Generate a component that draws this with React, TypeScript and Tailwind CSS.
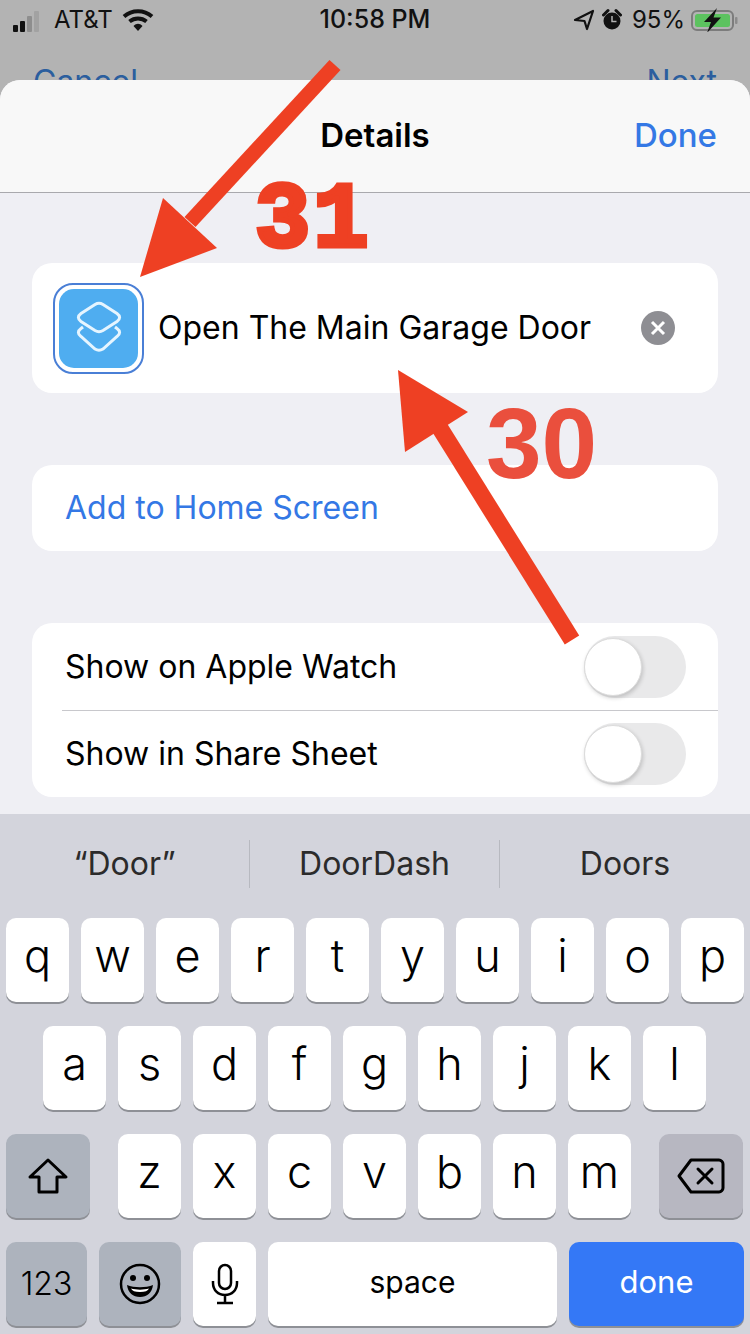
function StatusBar() {
  return (
    <div className="flex h-10 items-center justify-between pl-[13px] pr-[9px] text-[24px] text-[#111]">
      <div className="flex w-[296px] items-center">
        <svg width="32" height="24" viewBox="0 0 32 24" className="mr-[9px]">
          <rect x="0" y="17" width="5" height="7" rx="1" fill="#111" />
          <rect x="7" y="13" width="5" height="11" rx="1" fill="#111" />
          <rect x="14" y="8" width="5" height="16" rx="1" fill="#8e8e8e" />
          <rect x="21" y="3" width="5" height="21" rx="1" fill="#a2a2a2" />
        </svg>
        <span>AT&amp;T</span>
        <svg width="32" height="24" viewBox="0 0 32 24" className="ml-[9px]">
          <path d="M2 8.500C10 1.500 22 1.500 30 8.500" fill="none" stroke="#111" strokeWidth="4" />
          <path d="M7.500 13.500C12.500 9.500 19.500 9.500 24.500 13.500" fill="none" stroke="#111" strokeWidth="4" />
          <path d="M11.500 18C14.500 15 17.500 15 20.500 18L16 23Z" fill="#111" />
        </svg>
      </div>
      <span className="text-[25px] font-medium">10:58 PM</span>
      <div className="flex w-[300px] items-center justify-end">
        <svg width="22" height="24" viewBox="0 0 22 24" className="mr-[7px]">
          <path d="M2 12L20 3L14 21L11.500 13Z" fill="none" stroke="#111" strokeWidth="2.200" strokeLinejoin="round" />
        </svg>
        <svg width="20" height="24" viewBox="0 0 20 24" className="mr-[10px]">
          <circle cx="10" cy="13" r="8.500" fill="#111" />
          <path d="M1.500 7L6 2.500M18.500 7L14 2.500" stroke="#111" strokeWidth="3" strokeLinecap="round" />
          <path d="M10 8V13.500H14.500" fill="none" stroke="#b3b3b3" strokeWidth="1.500" />
        </svg>
        <span>95%</span>
        <svg width="50" height="24" viewBox="0 0 50 24" className="ml-[6px]">
          <rect x="1" y="3" width="41" height="19" rx="5" fill="none" stroke="#7c7c7c" strokeWidth="2" />
          <rect x="4" y="6" width="35" height="13" rx="2.500" fill="#5cc25f" />
          <rect x="44" y="9" width="2.500" height="7" rx="1" fill="#8b8b8b" />
          <path d="M26 0L13 14H20L16 25L30 9.500H22.500Z" fill="#111" />
        </svg>
      </div>
    </div>
  );
}

function Toggle() {
  return (
    <div className="flex h-[62px] w-[102px] items-center rounded-full bg-[#e9e9ea]">
      <div className="h-[58px] w-[58px] rounded-full border border-[#dcdcdc] bg-white shadow-[1px_2px_4px_rgba(0,0,0,0.18)]" />
    </div>
  );
}

function Key({ label }: { label: string }) {
  return (
    <div className="flex h-[84px] w-[63px] items-center justify-center rounded-[10px] bg-white pb-[8px] text-[45px] font-light text-black shadow-[0_2px_0_#8e9096]">
      {label}
    </div>
  );
}

function Keyboard() {
  return (
    <div className="h-[520px] bg-[#d3d4dc]">
      <div className="flex h-[104px] items-center pb-1 text-[32px] text-[#2b2b2b]">
        <div className="flex h-12 w-[250px] items-center justify-center border-r border-[#b7b9c0]">“Door”</div>
        <div className="flex h-12 w-[250px] items-center justify-center border-r border-[#b7b9c0]">DoorDash</div>
        <div className="flex h-12 w-[250px] items-center justify-center">Doors</div>
      </div>
      <div className="flex flex-col gap-6">
        <div className="flex gap-3 px-[6px]">
          {["q", "w", "e", "r", "t", "y", "u", "i", "o", "p"].map((k) => (
            <Key key={k} label={k} />
          ))}
        </div>
        <div className="flex gap-3 px-[43px]">
          {["a", "s", "d", "f", "g", "h", "j", "k", "l"].map((k) => (
            <Key key={k} label={k} />
          ))}
        </div>
        <div className="flex gap-3 px-[6px]">
          <div className="mr-4 flex h-[84px] w-[84px] items-center justify-center rounded-[10px] bg-[#adb3bd] shadow-[0_2px_0_#8e9096]">
            <svg width="42" height="38" viewBox="0 0 42 38">
              <path d="M21 3L39 20H30V35H12V20H3Z" fill="none" stroke="#000" strokeWidth="3" strokeLinejoin="round" />
            </svg>
          </div>
          {["z", "x", "c", "v", "b", "n", "m"].map((k) => (
            <Key key={k} label={k} />
          ))}
          <div className="ml-4 flex h-[84px] w-[84px] items-center justify-center rounded-[10px] bg-[#b7b7c1] shadow-[0_2px_0_#8e9096]">
            <svg width="48" height="36" viewBox="0 0 48 36">
              <path d="M14 2H42C44 2 46 4 46 6V30C46 32 44 34 42 34H14L2 18Z" fill="none" stroke="#000" strokeWidth="3" strokeLinejoin="round" />
              <path d="M21 11L35 25M35 11L21 25" stroke="#000" strokeWidth="3" strokeLinecap="round" />
            </svg>
          </div>
        </div>
        <div className="flex gap-3 px-[6px]">
          <div className="flex h-[84px] w-[81px] items-center justify-center rounded-[10px] bg-[#adb3bd] text-[32px] font-light text-black shadow-[0_2px_0_#8e9096]">
            123
          </div>
          <div className="flex h-[84px] w-[82px] items-center justify-center rounded-[10px] bg-[#adb3bd] shadow-[0_2px_0_#8e9096]">
            <svg width="42" height="42" viewBox="0 0 42 42">
              <circle cx="21" cy="21" r="19" fill="none" stroke="#000" strokeWidth="2.500" />
              <circle cx="14" cy="15" r="3" fill="#000" />
              <circle cx="28" cy="15" r="3" fill="#000" />
              <path d="M8 22C15 25 27 25 34 22C33 30 28 34 21 34C14 34 9 30 8 22Z" fill="#000" />
              <path d="M12 25.500C17 27 25 27 30 25.500C29 28 26 29 21 29C16 29 13 28 12 25.500Z" fill="#fff" />
            </svg>
          </div>
          <div className="flex h-[84px] w-[63px] items-center justify-center rounded-[10px] bg-white shadow-[0_2px_0_#8e9096]">
            <svg width="28" height="42" viewBox="0 0 28 42">
              <rect x="8" y="2" width="12" height="24" rx="6" fill="none" stroke="#000" strokeWidth="2.500" />
              <path d="M2 18V20C2 27 7 32 14 32C21 32 26 27 26 20V18M14 32V40M6 40H22" fill="none" stroke="#000" strokeWidth="2.500" />
            </svg>
          </div>
          <div className="flex h-[84px] flex-1 items-center justify-center rounded-[10px] bg-white pb-1 text-[30px] text-black shadow-[0_2px_0_#8e9096]">
            space
          </div>
          <div className="flex h-[84px] w-[175px] items-center justify-center rounded-[10px] bg-[#3478f6] pb-1 text-[31px] text-white shadow-[0_2px_0_#8e9096]">
            done
          </div>
        </div>
      </div>
    </div>
  );
}

function Annotations() {
  return (
    <>
      <svg width="750" height="700" viewBox="0 0 750 700" className="absolute left-0 top-0">
        <path d="M335 65L190 222" stroke="#ee4023" strokeWidth="15" />
        <path d="M140 277L163 198L217 248Z" fill="#ee4023" />
        <path d="M438 425L572 640" stroke="#ee4023" strokeWidth="17" />
        <path d="M398 370L468 412L405 452Z" fill="#ee4023" />
      </svg>
      <div className="absolute left-[255px] top-[167px] font-['Liberation_Mono',monospace] text-[92px] font-bold leading-[110px] tracking-[3px] text-[#ee4023] [-webkit-text-stroke:5px_#ee4023]">
        31
      </div>
      <div className="absolute left-[486px] top-[385px] font-['Liberation_Sans',sans-serif] text-[100px] font-bold leading-[116px] text-[#ea4f3d]">
        30
      </div>
    </>
  );
}

export default function App() {
  return (
    <div className="relative h-[1334px] w-[750px] overflow-hidden bg-[#b3b3b3] font-['Inter','Liberation_Sans',sans-serif]">
      <StatusBar />
      <div className="flex h-10 justify-between overflow-hidden px-[33px] pt-[22px] text-[32px] leading-10 text-[#2b5e9e]">
        <span>Cancel</span>
        <span>Next</span>
      </div>

      <div className="h-[734px] overflow-hidden rounded-t-[20px] bg-[#efeff4]">
        <header className="relative flex h-[113px] items-center justify-center border-b border-[#a9a9ad] bg-[#f8f8f8] text-[33px]">
          <span className="font-semibold text-black">Details</span>
          <span className="absolute right-[33px] font-medium text-[#3478e5]">Done</span>
        </header>

        <div className="flex flex-col gap-[72px] px-8 pt-[70px]">
          <div className="flex h-[130px] items-center rounded-[20px] bg-white pl-[21px] pr-[43px]">
            <div className="flex h-[91px] w-[91px] shrink-0 items-center justify-center rounded-[20px] border-2 border-[#4a7fd6] p-[4px]">
              <div className="flex h-full w-full items-center justify-center rounded-[15px] bg-[#4fadf0]">
                <svg width="48" height="54" viewBox="0 0 48 54" fill="none" stroke="#e6f5ff" strokeWidth="3">
                  <path d="M20 3.500C22.500 2 25.500 2 28 3.500L42 12.500C45.500 15 45.500 18 42 20.500L28 29.500C25.500 31 22.500 31 20 29.500L6 20.500C2.500 18 2.500 15 6 12.500Z" />
                  <path d="M8 26L6 27.500C2.500 30 2.500 33 6 35.500L20 48C22.500 49.500 25.500 49.500 28 48L42 35.500C45.500 33 45.500 30 42 27.500L40 26" />
                </svg>
              </div>
            </div>
            <span className="ml-[14px] flex-1 text-[32px] text-black">Open The Main Garage Door</span>
            <div className="flex h-[34px] w-[34px] items-center justify-center rounded-full bg-[#8e8e93]">
              <svg width="16" height="16" viewBox="0 0 16 16">
                <path d="M2 2L14 14M14 2L2 14" stroke="#fff" strokeWidth="3" />
              </svg>
            </div>
          </div>

          <div className="flex h-[86px] items-center rounded-[20px] bg-white pl-[33px] text-[32px] text-[#3478e5]">
            Add to Home Screen
          </div>

          <div className="rounded-[20px] bg-white">
            <div className="flex h-[87px] items-center justify-between pl-[33px] pr-8 text-[32px] text-black">
              Show on Apple Watch
              <Toggle />
            </div>
            <div className="ml-[30px] h-px bg-[#c8c8cc]" />
            <div className="flex h-[86px] items-center justify-between pl-[33px] pr-8 text-[32px] text-black">
              Show in Share Sheet
              <Toggle />
            </div>
          </div>
        </div>
      </div>

      <Keyboard />
      <Annotations />
    </div>
  );
}
